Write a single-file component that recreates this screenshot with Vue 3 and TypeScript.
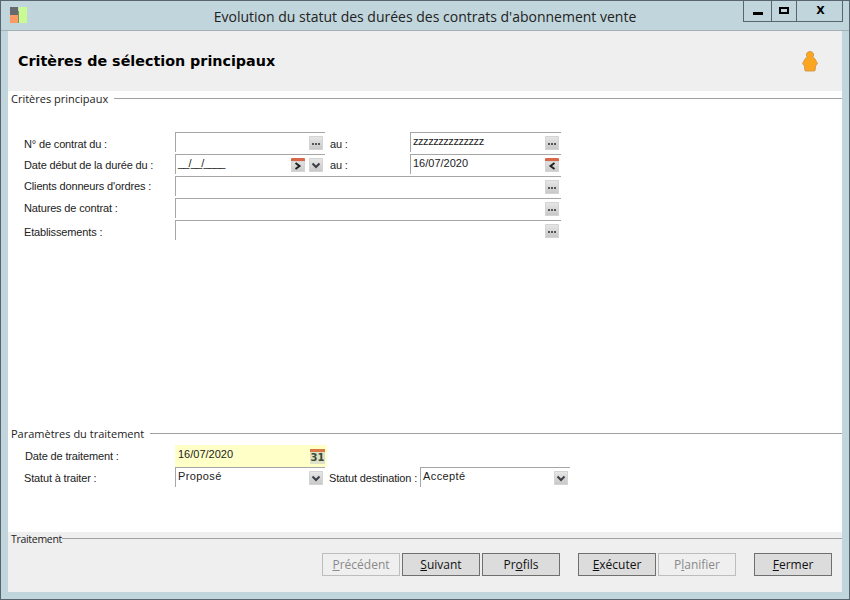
<template>
  <div class="window">
    <div class="titlebar">
      <svg class="logo" width="18" height="18" viewBox="0 0 18 18">
        <rect x="0" y="0" width="8" height="8" fill="#666a6c" />
        <rect x="0" y="8" width="8" height="8" fill="#fb9a62" />
        <rect x="8" y="4" width="1" height="12" fill="#7d8a70" />
        <rect x="9" y="0" width="8" height="16" fill="#c9fb92" />
      </svg>
      <span class="title">Evolution du statut des durées des contrats d'abonnement vente</span>
      <div class="winctrls">
        <div class="winbtn min"><i></i></div>
        <div class="winbtn max"><i></i></div>
        <div class="winbtn close">X</div>
      </div>
    </div>

    <div class="content">
      <div class="header">
        <h1>Critères de sélection principaux</h1>
        <svg width="18" height="22" viewBox="0 0 18 22">
          <path
            d="M9 1.500c-2.200 0-3.600 1.600-3.600 3.400 0 1 .4 1.800 1 2.300C4.800 7.800 3.400 9 3 11l-1.500 2.500L3.500 16l.3 4c0 .6.4 1 1 1h8.400c.6 0 1-.4 1-1l.3-4 2-2.500L15 11c-.4-2-1.800-3.200-3.400-3.800.6-.5 1-1.300 1-2.300 0-1.800-1.400-3.400-3.600-3.400Z"
            fill="#fca61f"
            stroke="#c98f45"
            stroke-width=".8"
          />
        </svg>
      </div>

      <div class="main">
        <div class="legend"><span>Critères principaux</span><i></i></div>

        <div class="form">
          <div class="row">
            <label>N° de contrat du :</label>
            <div class="field half"><span class="val"></span><span class="btn dots"><b></b></span></div>
            <label class="au">au :</label>
            <div class="field half wide"><span class="val zed">zzzzzzzzzzzzzz</span><span class="btn dots"><b></b></span></div>
          </div>
          <div class="row">
            <label class="mid">Date début de la durée du :</label>
            <div class="field half">
              <span class="val mask">__/__/____</span>
              <span class="btn cal">
                <svg width="14" height="14" viewBox="0 0 14 14"><path d="M4.500 5l4 3-4 3" fill="none" stroke="#222" stroke-width="2" /></svg>
              </span>
              <span class="btn">
                <svg width="14" height="14" viewBox="0 0 14 14"><path d="M3.500 5.500l3.500 3.500 3.500-3.500" fill="none" stroke="#3a3f45" stroke-width="2" /></svg>
              </span>
            </div>
            <label class="au mid">au :</label>
            <div class="field half wide">
              <span class="val">16/07/2020</span>
              <span class="btn cal">
                <svg width="14" height="14" viewBox="0 0 14 14"><path d="M9.500 5l-4 3 4 3" fill="none" stroke="#222" stroke-width="2" /></svg>
              </span>
            </div>
          </div>
          <div v-for="item in longRows" :key="item.label" class="row">
            <label :class="{ tight: item.tight }">{{ item.label }}</label>
            <div class="field long"><span class="val"></span><span class="btn dots"><b></b></span></div>
          </div>
        </div>

        <div class="legend params"><span>Paramètres du traitement</span><i></i></div>

        <div class="form bottom">
          <div class="row">
            <label class="nudge mid">Date de traitement :</label>
            <div class="field date">
              <span class="val">16/07/2020</span>
              <span class="cal31"><em>31</em></span>
            </div>
          </div>
          <div class="row">
            <label class="mid">Statut à traiter :</label>
            <div class="field half">
              <span class="val bold">Proposé</span>
              <span class="btn">
                <svg width="14" height="14" viewBox="0 0 14 14"><path d="M3.500 5.500l3.500 3.500 3.500-3.500" fill="none" stroke="#3a3f45" stroke-width="2" /></svg>
              </span>
            </div>
            <label class="dest mid">Statut destination :</label>
            <div class="field half">
              <span class="val bold">Accepté</span>
              <span class="btn">
                <svg width="14" height="14" viewBox="0 0 14 14"><path d="M3.500 5.500l3.500 3.500 3.500-3.500" fill="none" stroke="#3a3f45" stroke-width="2" /></svg>
              </span>
            </div>
          </div>
        </div>
      </div>

      <div class="footer">
        <div class="legend foot"><span>Traitement</span><i></i></div>
        <div class="actions">
          <button disabled><u>P</u>récédent</button>
          <button class="next"><u>S</u>uivant</button>
          <button class="next">Pr<u>o</u>fils</button>
          <button class="gap"><u>E</u>xécuter</button>
          <button class="next" disabled>P<u>l</u>anifier</button>
          <button class="gap"><u>F</u>ermer</button>
        </div>
      </div>
    </div>
  </div>
</template>

<script setup lang="ts">
interface LongRow {
  label: string;
  tight: boolean;
}

const longRows: LongRow[] = [
  { label: "Clients donneurs d'ordres :", tight: true },
  { label: "Natures de contrat :", tight: true },
  { label: "Etablissements :", tight: false },
];
</script>

<style scoped>
.window {
  width: 850px;
  height: 600px;
  box-sizing: border-box;
  border: 1px solid #59656e;
  background: #c1d5dc;
  display: flex;
  flex-direction: column;
  overflow: hidden;
  font-family: "Liberation Sans", Arial, sans-serif;
  color: #111;
}
.titlebar {
  height: 30px;
  flex: none;
  display: flex;
  position: relative;
  box-sizing: border-box;
  border-bottom: 1px solid #a3afb5;
}
.logo {
  position: absolute;
  left: 9px;
  top: 6px;
}
.title {
  flex: 1;
  text-align: center;
  font: 14px/31px "Open Sans", sans-serif;
  color: #222;
}
.winctrls {
  position: absolute;
  right: 6px;
  top: -1px;
  height: 22px;
  display: flex;
  box-sizing: border-box;
  border: 1px solid #59656e;
  border-top: 0;
}
.winbtn {
  display: flex;
  align-items: center;
  justify-content: center;
  box-sizing: border-box;
  height: 21px;
}
.min {
  width: 28px;
  border-right: 1px solid #59656e;
}
.min i {
  width: 10px;
  height: 3px;
  background: #000;
  margin-top: 5px;
}
.max {
  width: 25px;
  border-right: 1px solid #59656e;
}
.max i {
  width: 10px;
  height: 7px;
  box-sizing: border-box;
  border: 2px solid #000;
}
.close {
  width: 45px;
  font: bold 11px "DejaVu Sans", sans-serif;
  color: #000;
  padding-left: 2px;
}
.content {
  flex: 1;
  margin: 0 7px 7px;
  display: flex;
  flex-direction: column;
  min-height: 0;
}
.header {
  height: 60px;
  flex: none;
  background: #efefef;
  display: flex;
  align-items: center;
  justify-content: space-between;
  padding: 0 23px 0 10px;
}
.header h1 {
  margin: 0;
  font: bold 14.300px "DejaVu Sans", sans-serif;
  color: #000;
}
.header svg {
  margin-top: -1px;
}
.main {
  height: 441px;
  flex: none;
  background: #fff;
}
.legend {
  display: flex;
  align-items: center;
  height: 16px;
  padding-left: 3px;
  font: 11px/16px "Open Sans", sans-serif;
  color: #222;
}
.legend i {
  flex: 1;
  height: 1px;
  background: #a0a0a0;
  margin-left: 6px;
  margin-top: -1px;
}
.form {
  margin-top: 25px;
  padding-left: 16px;
}
.row {
  display: flex;
  height: 22px;
  font-size: 11px;
}
.row label {
  width: 151px;
  flex: none;
  line-height: 24px;
  letter-spacing: -0.15px;
  white-space: nowrap;
  color: #222;
}
.row label.mid {
  line-height: 22px;
}
.row label.tight {
  line-height: 20px;
}
.row label.nudge {
  padding-left: 1px;
  width: 150px;
}
.row label.au {
  width: 85px;
  padding-left: 5px;
  box-sizing: border-box;
}
.row label.dest {
  width: 95px;
  padding-left: 4px;
  box-sizing: border-box;
}
.field {
  height: 20px;
  box-sizing: border-box;
  border-top: 1px solid #a6a6a6;
  border-left: 1px solid #a6a6a6;
  display: flex;
  align-items: flex-start;
  gap: 4px;
  padding: 2px 2px 0 2px;
}
.half {
  width: 150px;
}
.half.wide {
  width: 151px;
}
.long {
  width: 386px;
}
.val {
  flex: 1;
  font-size: 11px;
  line-height: 13px;
  white-space: nowrap;
  color: #222;
}
.val.zed {
  letter-spacing: -0.45px;
}
.val.mask {
  letter-spacing: -0.85px;
}
.val.bold {
  letter-spacing: 0.4px;
}
.btn {
  width: 14px;
  height: 14px;
  box-sizing: border-box;
  margin-top: 1px;
  flex: none;
  border-radius: 1px;
  background: linear-gradient(#e8e8e8, #c6c6c6);
  box-shadow: inset 0 0 0 1px #d4d4d4;
  display: flex;
  align-items: center;
  justify-content: center;
  position: relative;
  overflow: hidden;
}
.btn svg {
  position: absolute;
  left: 0;
  top: 0;
}
.dots b {
  width: 2px;
  height: 2px;
  background: #555;
  box-shadow: 3px 0 #555, -3px 0 #555;
  margin-top: 2px;
}
.cal {
  background: linear-gradient(#e2e2e2, #cacaca);
  border-top: 3px solid #d9684a;
}
.cal svg {
  top: -3px;
}
.params {
  margin-top: 184px;
}
.bottom {
  margin-top: 3px;
}
.date {
  width: 152px;
  height: 22px;
  border: 0;
  background: #ffffc8;
  padding-top: 3px;
  padding-left: 3px;
}
.cal31 {
  width: 15px;
  height: 15px;
  flex: none;
  box-sizing: border-box;
  margin: 1px 0 0 0;
  border-top: 3px solid #d97a45;
  background: #dfe0c8;
  display: flex;
  justify-content: center;
  font: bold 10px/12px "DejaVu Sans", sans-serif;
  color: #3c4a30;
}
.cal31 em {
  font-style: normal;
}
.footer {
  flex: 1;
  background: #efefef;
}
.foot {
  height: 14px;
  margin-top: 0;
  font-size: 10.500px;
  letter-spacing: -0.3px;
}
.foot i {
  margin-left: 0;
}
.actions {
  display: flex;
  padding: 7px 0 0 314px;
}
.actions button {
  width: 78px;
  height: 23px;
  box-sizing: border-box;
  border: 1px solid #6f6f6f;
  background: #dcdcdc;
  font: 12px "Open Sans", sans-serif;
  color: #111;
  padding: 0;
  margin: 0;
}
.actions button.next {
  margin-left: 2px;
}
.actions button.gap {
  margin-left: 18px;
}
.actions button:disabled {
  border-color: #bdbdbd;
  background: #efefef;
  color: #8a8a8a;
}
</style>

<style>
html,
body {
  margin: 0;
  background: #c1d5dc;
}
</style>
